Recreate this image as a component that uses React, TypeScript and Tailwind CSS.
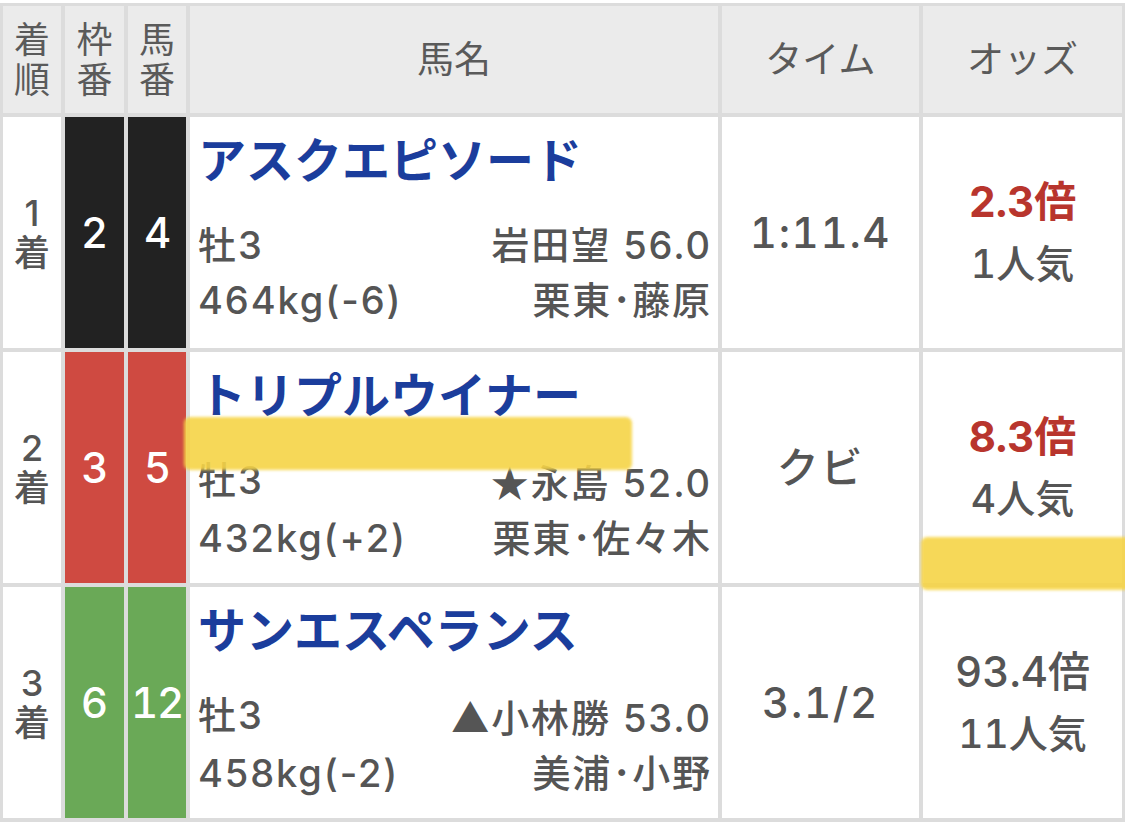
import React from "react";

type Row = {
  rank: string;
  waku: string;
  uma: string;
  wakuBg: string;
  name: string;
  sex: string;
  mark: string;
  jockey: string;
  weight: string;
  stableA: string;
  stableB: string;
  time: string;
  odds: string;
  pop: string;
  hot: boolean;
};

const rows: Row[] = [
  {
    rank: "1",
    waku: "2",
    uma: "4",
    wakuBg: "bg-[#222222]",
    name: "アスクエピソード",
    sex: "牡3",
    mark: "",
    jockey: "岩田望 56.0",
    weight: "464kg(-6)",
    stableA: "栗東",
    stableB: "藤原",
    time: "1:11.4",
    odds: "2.3倍",
    pop: "1人気",
    hot: true,
  },
  {
    rank: "2",
    waku: "3",
    uma: "5",
    wakuBg: "bg-[#cf4a41]",
    name: "トリプルウイナー",
    sex: "牡3",
    mark: "★",
    jockey: "永島 52.0",
    weight: "432kg(+2)",
    stableA: "栗東",
    stableB: "佐々木",
    time: "クビ",
    odds: "8.3倍",
    pop: "4人気",
    hot: true,
  },
  {
    rank: "3",
    waku: "6",
    uma: "12",
    wakuBg: "bg-[#6aa957]",
    name: "サンエスペランス",
    sex: "牡3",
    mark: "▲",
    jockey: "小林勝 53.0",
    weight: "458kg(-2)",
    stableA: "美浦",
    stableB: "小野",
    time: "3.1/2",
    odds: "93.4倍",
    pop: "11人気",
    hot: false,
  },
];

export default function App() {
  return (
    <div className="relative w-[1125px] h-[822px] overflow-hidden bg-white pt-[3px] font-['Inter','Noto_Sans_CJK_JP',sans-serif] text-[#555555]">
      <div className="grid grid-cols-[58px_59px_58px_528px_197px_199px] grid-rows-[107px_231px_231px_231px] gap-[4px] bg-[#dcdcdc] p-[3px] pb-[4px]">
        {/* header */}
        <div className="bg-[#ebebeb] flex flex-col items-center justify-center text-[36px] leading-[40px] text-[#5a5a5a]">
          <span>着</span>
          <span>順</span>
        </div>
        <div className="bg-[#ebebeb] flex flex-col items-center justify-center text-[36px] leading-[40px] text-[#5a5a5a]">
          <span>枠</span>
          <span>番</span>
        </div>
        <div className="bg-[#ebebeb] flex flex-col items-center justify-center text-[36px] leading-[40px] text-[#5a5a5a]">
          <span>馬</span>
          <span>番</span>
        </div>
        <div className="bg-[#ebebeb] flex items-center justify-center text-[37px] text-[#5a5a5a]">馬名</div>
        <div className="bg-[#ebebeb] flex items-center justify-center text-[37px] text-[#5a5a5a]">タイム</div>
        <div className="bg-[#ebebeb] flex items-center justify-center text-[37px] text-[#5a5a5a]">オッズ</div>

        {rows.map((r) => (
          <React.Fragment key={r.rank}>
            <div className="bg-white flex flex-col items-center justify-center text-[36px] leading-[40px] font-medium">
              <span>{r.rank}</span>
              <span>着</span>
            </div>
            <div className={`${r.wakuBg} flex items-center justify-center text-white text-[42px] font-medium`}>
              {r.waku}
            </div>
            <div className={`${r.wakuBg} flex items-center justify-center text-white text-[42px] font-medium tabular-nums tracking-[-0.03em]`}>
              {r.uma}
            </div>
            <div className="bg-white flex flex-col pl-[8px] pr-[6px] pt-[14px]">
              <div className="text-[48px] leading-[60px] font-bold text-[#1b3d9c] whitespace-nowrap">
                {r.name}
              </div>
              <div className="mt-[27px] flex justify-between text-[38px] leading-[55px] font-medium whitespace-nowrap tracking-[0.05em]">
                <span>{r.sex}</span>
                <span>
                  {r.mark && <span className="font-['Noto_Sans_CJK_JP',sans-serif]">{r.mark}</span>}
                  {r.jockey}
                </span>
              </div>
              <div className="flex justify-between text-[38px] leading-[55px] font-medium whitespace-nowrap tracking-[0.05em]">
                <span>{r.weight}</span>
                <span>
                  {r.stableA}
                  <span className="inline-block w-[20px] text-center">･</span>
                  {r.stableB}
                </span>
              </div>
            </div>
            <div className="bg-white flex items-center justify-center text-[42px] font-medium tabular-nums tracking-[0.04em]">
              {r.time}
            </div>
            <div className="bg-white flex flex-col items-center justify-center text-[39px] leading-[62px] font-medium tabular-nums">
              <span className={r.hot ? "text-[42px] font-bold text-[#b8352d]" : "text-[42px]"}>
                {r.odds}
              </span>
              <span>{r.pop}</span>
            </div>
          </React.Fragment>
        ))}
      </div>

      {/* highlighter marks */}
      <div className="absolute left-[184px] top-[417px] w-[448px] h-[53px] rounded-[6px] bg-[#f6d447] opacity-90 blur-[1.5px]" />
      <div className="absolute left-[921px] top-[537px] w-[210px] h-[53px] rounded-l-[6px] bg-[#f6d447] opacity-90 blur-[1.5px]" />
    </div>
  );
}
